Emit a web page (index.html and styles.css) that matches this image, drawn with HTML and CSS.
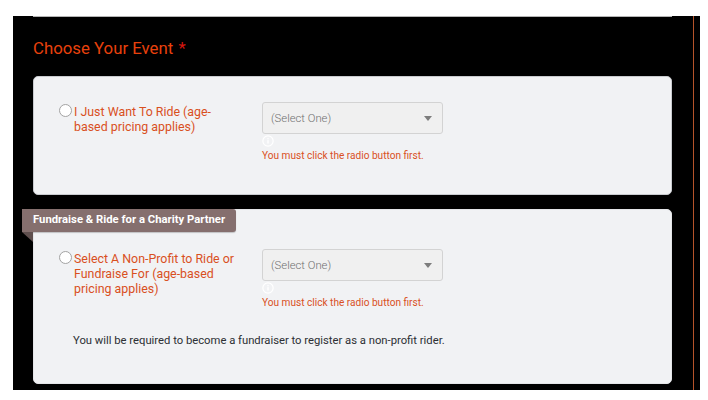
FILE: index.html
```html
<!DOCTYPE html>
<html lang="en">
<head>
<meta charset="utf-8">
<title>Choose Your Event</title>
<link rel="stylesheet" href="styles.css">
</head>
<body>
<main class="page">
  <div class="inner">
    <div class="rule"></div>
    <h2 class="title">Choose Your Event <span class="req">*</span></h2>
    <section class="card card-first">
      <div class="row">
        <label class="choice"><span class="radio"></span><span class="choice-text">I Just Want To Ride (age-based pricing applies)</span></label>
        <div class="field">
          <div class="select"><span>(Select One)</span><span class="caret"></span></div>
          <svg class="info" viewBox="0 0 14 14"><circle cx="7" cy="7" r="6" fill="none" stroke="#fff" stroke-width="1.4"/><rect x="6.2" y="6" width="1.6" height="4" fill="#fff"/><rect x="6.2" y="3.6" width="1.6" height="1.5" fill="#fff"/></svg>
          <p class="error">You must click the radio button first.</p>
        </div>
      </div>
    </section>
    <section class="card card-second">
      <div class="ribbon">Fundraise &amp; Ride for a Charity Partner</div>
      <div class="row">
        <label class="choice"><span class="radio"></span><span class="choice-text">Select A Non-Profit to Ride or Fundraise For (age-based pricing applies)</span></label>
        <div class="field">
          <div class="select"><span>(Select One)</span><span class="caret"></span></div>
          <svg class="info" viewBox="0 0 14 14"><circle cx="7" cy="7" r="6" fill="none" stroke="#fff" stroke-width="1.4"/><rect x="6.2" y="6" width="1.6" height="4" fill="#fff"/><rect x="6.2" y="3.6" width="1.6" height="1.5" fill="#fff"/></svg>
          <p class="error">You must click the radio button first.</p>
        </div>
      </div>
      <p class="note">You will be required to become a fundraiser to register as a non-profit rider.</p>
    </section>
  </div>
  <div class="edge"></div>
</main>
</body>
</html>
```
FILE: styles.css
```css
* { box-sizing: border-box; }
html, body { margin: 0; padding: 0; background: #fff; height: 400px; overflow: hidden; }
body { font-family: Roboto, "Liberation Sans", sans-serif; padding-top: 16px; }
.page { display: flex; margin-left: 13px; width: 687px; height: 374px; background: #000; padding-left: 20px; }
.inner { flex: none; width: 639px; }
.edge { flex: none; width: 1px; margin-left: 21px; background: #b5532a; }
.rule { height: 1px; background: #b4b4b4; }
.title { margin: 20px 0 0; font-size: 16.8px; line-height: 22px; font-weight: 400; color: #e8410c; }
.req { margin-left: 1px; color: #d4160f; }
.card { position: relative; background: #f1f2f4; border-radius: 5px; border: 1px solid #c9cbcf; }
.card-first { margin-top: 17px; height: 119px; padding: 25px 0 0 25px; }
.card-second { margin-top: 14px; height: 175px; padding: 39px 0 0 25px; border-color: #e4e5e8; }
.row { display: flex; align-items: flex-start; }
.choice { display: flex; width: 203px; }
.radio { flex: none; width: 13px; height: 13px; margin: 2px 2px 0 0; border-radius: 50%; background: #fff; border: 1px solid #a3a3a3; }
.choice-text { width: 165px; padding-top: 2px; font-size: 12.4px; line-height: 15px; color: #d9501e; }
.field { width: 181px; }
.select { display: flex; justify-content: space-between; align-items: center; height: 32px; padding: 0 10px 0 8px; background: #f0f0f0; border: 1px solid #d3d3d3; border-radius: 3px; font-size: 11.3px; font-weight: 300; color: #6f6f6f; }
.caret { width: 0; height: 0; border-left: 4px solid transparent; border-right: 4px solid transparent; border-top: 5px solid #7d7d7d; }
.info { display: block; width: 12px; height: 12px; margin-top: 1px; }
.error { margin: 1px 0 0; font-size: 10.1px; line-height: 15px; color: #d9501e; }
.ribbon { position: absolute; left: -12px; top: -1px; height: 23px; padding: 0 11px; background: #856f6e; border-radius: 0 3px 3px 0; font-size: 11.3px; font-weight: 700; line-height: 22px; color: #fff; box-shadow: 0 1px 1px rgba(0,0,0,.2); }
.ribbon::after { content: ""; position: absolute; left: 0; top: 100%; border-top: 10px solid #5f4f4e; border-left: 11px solid transparent; }
.note { margin: 23px 0 0 14px; font-size: 11.25px; line-height: 16px; color: #2c2f33; }
```
